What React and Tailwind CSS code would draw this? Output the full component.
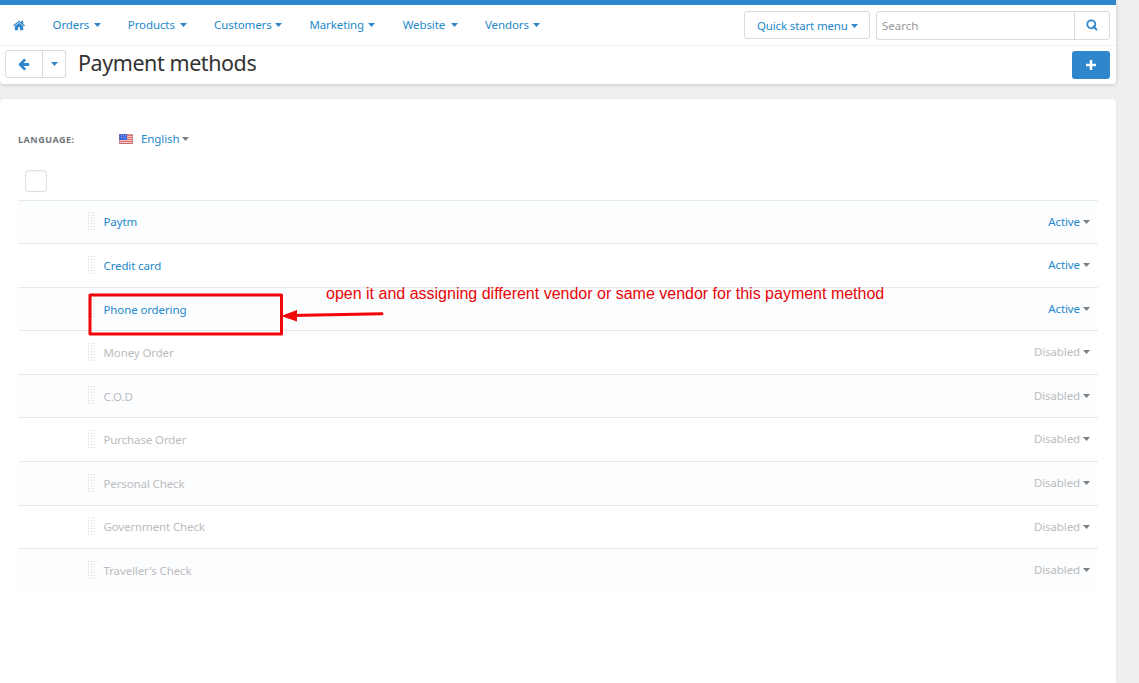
import React, { useState } from 'react';

const MENU = [
  { label: 'Orders', width: 'w-[41px]' },
  { label: 'Products', width: 'w-[52px]' },
  { label: 'Customers', width: 'w-[61px]' },
  { label: 'Marketing', width: 'w-[59px]' },
  { label: 'Website', width: 'w-[48px]' },
  { label: 'Vendors', width: 'w-[48px]' },
];

const METHODS = [
  { name: 'Paytm', active: true, height: 'h-[43px]', offset: 'pb-[1px]' },
  { name: 'Credit card', active: true, height: 'h-[44px]', offset: 'pt-[1px]' },
  { name: 'Phone ordering', active: true, height: 'h-[43px]', offset: 'pt-[1px]' },
  { name: 'Money Order', active: false, height: 'h-[44px]', offset: 'pt-[1px]' },
  { name: 'C.O.D', active: false, height: 'h-[43px]', offset: 'pt-[1px]' },
  { name: 'Purchase Order', active: false, height: 'h-[44px]', offset: 'pt-[1px]' },
  { name: 'Personal Check', active: false, height: 'h-[44px]', offset: 'pt-[1px]' },
  { name: 'Government Check', active: false, height: 'h-[43px]', offset: 'pb-[1px]' },
  { name: "Traveller's Check", active: false, height: 'h-[44px]', offset: 'pt-[1px]' },
];

function Caret({ className = 'text-[#2f86cb]' }) {
  return (
    <svg viewBox="0 0 7 4" className={`w-[7px] h-[4px] shrink-0 ${className}`}>
      <path d="M0 0h7L3.5 4z" fill="currentColor" />
    </svg>
  );
}

function HomeIcon() {
  return (
    <svg viewBox="0 0 1792 1792" className="w-[13px] h-[13px]" fill="currentColor">
      <path d="M1408 992v480q0 26-19 45t-45 19h-384v-384h-256v384h-384q-26 0-45-19t-19-45v-480q0-1 .5-3t.5-3l575-474 575 474q1 2 1 6zm223-69l-62 74q-8 9-21 11h-3q-13 0-21-7l-692-577-692 577q-12 8-24 7-13-2-21-11l-62-74q-8-10-7-23.5t11-21.5l719-599q32-26 76-26t76 26l244 204v-195q0-14 9-23t23-9h192q14 0 23 9t9 23v408l219 182q10 8 11 21.5t-7 23.5z" />
    </svg>
  );
}

function FlagIcon() {
  return (
    <svg viewBox="0 0 14 10" className="w-[14px] h-[10px]">
      <rect width="14" height="10" fill="#f5c3be" />
      <path d="M0 1.5h14M0 3.5h14M0 5.5h14M0 7.5h14M0 9.5h14" stroke="#e4706a" />
      <rect width="8" height="6" fill="#4169dc" />
      <path d="M2 1.5h5M2 3.5h5" stroke="#7f9cf0" strokeDasharray="1 1" />
      <rect x=".5" y=".5" width="13" height="9" fill="none" stroke="#8c6a8a" strokeOpacity=".4" />
    </svg>
  );
}

function DragHandle() {
  return (
    <svg viewBox="0 0 7 18" className="w-[7px] h-[18px]">
      <path d="M.5 0v18M3.5 0v18M5.7 0v18" stroke="#d6d6d6" strokeDasharray="1 1.8" />
    </svg>
  );
}

function MethodRow({ method, striped }) {
  const { name, active, height, offset } = method;
  return (
    <div className={`flex items-center border-t border-[#e6eaeb] ${height} ${striped ? 'bg-[#fbfdff]' : ''}`}>
      <div className="pl-[70px] pr-[8.5px] pb-[2px]"><DragHandle /></div>
      <a className={`tracking-[-0.12px] ${offset} ${active ? 'text-[#2488ca]' : 'text-[#bcbcbc]'}`}>{name}</a>
      <div className={`ml-auto flex items-center gap-[3px] pr-[8px] pb-[1px] ${active ? 'text-[#2488ca]' : 'text-[#bcbcbc]'}`}>
        <span className="tracking-[-0.1px]">{active ? 'Active' : 'Disabled'}</span>
        <Caret className="text-[#7b7f82]" />
      </div>
    </div>
  );
}

export default function App() {
  const [query, setQuery] = useState('');
  return (
    <div className="relative w-[1139px] h-[683px] overflow-hidden bg-[#eeeff1] font-['Noto_Sans',sans-serif] text-[11.5px] leading-[16px] text-[#2488ca]">
      <div className="w-[1116px] h-full flex flex-col">
        <header className="h-[84px] shrink-0 bg-white border-t-[5px] border-[#2f86cb] rounded-b-[4px] shadow-[0_1px_4px_rgba(0,0,0,0.16)]">
          <nav className="h-[41px] flex items-center border-b border-[#f0f2f2] pl-[13px] pr-[6px]">
            <div className="w-[39.5px] text-[#2f86cb]"><HomeIcon /></div>
            <div className="flex gap-[27.3px]">
              {MENU.map((item) => (
                <a key={item.label} className="flex items-center">
                  <span className={`${item.width} whitespace-nowrap tracking-[-0.1px]`}>{item.label}</span>
                  <Caret />
                </a>
              ))}
            </div>
            <button className="ml-auto w-[126px] h-[28px] flex items-center gap-[3px] pl-[12px] pt-[1px] border border-[#d5dbdf] rounded-[3px] whitespace-nowrap">
              <span className="w-[91px] text-left tracking-[-0.15px]">Quick start menu</span>
              <Caret />
            </button>
            <div className="ml-[6px] mt-[1px] w-[234px] h-[29px] flex border border-[#d5dbdf] rounded-[3px]">
              <input
                value={query}
                onChange={(e) => setQuery(e.target.value)}
                placeholder="Search"
                className="w-[198px] pl-[5px] border-r border-[#d5dbdf] outline-none placeholder:text-[#999]"
              />
              <button className="flex-1 flex items-center justify-center pb-[1px]">
                <svg viewBox="0 0 12 12" className="w-[12px] h-[12px]" fill="none" stroke="#2f86cb" strokeWidth="1.8">
                  <circle cx="5.3" cy="5.3" r="4" />
                  <path d="M6.8 7l4.2 4" />
                </svg>
              </button>
            </div>
          </nav>
          <div className="h-[36px] flex items-center pl-[5px] pr-[6px]">
            <div className="w-[61px] h-[28px] flex border border-[#d5dbdf] rounded-[3px]">
              <button className="w-[37px] flex items-center justify-center border-r border-[#d5dbdf]">
                <svg viewBox="0 0 1600 1792" className="w-[12px] h-[13px]" fill="#2f86cb">
                  <path d="M1536 832v128q0 53-32.5 90.5t-84.5 37.5h-704l293 294q38 36 38 90t-38 90l-75 76q-37 37-90 37-52 0-91-37l-651-652q-37-37-37-90 0-52 37-91l651-650q38-38 91-38 52 0 90 38l75 74q38 38 38 91t-38 91l-293 293h704q52 0 84.5 37.5t32.5 90.5z" />
                </svg>
              </button>
              <button className="w-[22px] flex items-center justify-center"><Caret /></button>
            </div>
            <h1 className="ml-[12px] pb-[2px] text-[21.5px] leading-[28px] tracking-[-0.43px] text-[#333]">Payment methods</h1>
            <button className="ml-auto mt-[2px] w-[38px] h-[28px] flex items-center justify-center pb-[1px] rounded-[3px] bg-[#2f86cb]">
              <svg viewBox="0 0 10 10" className="w-[10px] h-[10px]">
                <path d="M5 0v10M0 5h10" stroke="#fff" strokeWidth="2.4" />
              </svg>
            </button>
          </div>
        </header>

        <main className="mt-[15px] flex-1 bg-white rounded-t-[4px] shadow-[0_0_2px_rgba(0,0,0,0.08)] pl-[18px] pr-[18px]">
          <div className="h-[71px] pt-[32px] flex items-start">
            <span className="w-[101px] pt-[1px] text-[9px] font-bold tracking-[0.52px] text-[#6f7578]">LANGUAGE:</span>
            <div className="pt-[3px]"><FlagIcon /></div>
            <span className="ml-[8px] w-[41px] tracking-[-0.1px]">English</span>
            <Caret className="mt-[6px] text-[#7b7f82]" />
          </div>
          <div className="h-[30px] pl-[7px]">
            <div className="w-[22px] h-[22px] border border-[#dcdfe1] rounded-[3px] shadow-[inset_0_1px_2px_rgba(0,0,0,0.05)]" />
          </div>
          {METHODS.map((method, i) => (
            <MethodRow key={method.name} method={method} striped={i % 2 === 0} />
          ))}
        </main>
      </div>

      {/* annotation */}
      <svg viewBox="0 0 300 46" className="absolute left-[86px] top-[291px] w-[300px] h-[46px]" fill="none" stroke="#f20509">
        <rect x="4" y="4" width="191.5" height="39" strokeWidth="3" strokeLinejoin="round" />
        <path d="M205 24.5L296 22.8" strokeWidth="3" strokeLinecap="round" />
        <path d="M195 25L211 19v11.5z" fill="#f20509" stroke="none" />
      </svg>
      <p className="absolute left-[326px] top-[284px] whitespace-nowrap font-['Liberation_Sans',sans-serif] text-[16px] leading-[20px] text-[#e80508]">
        open it and assigning different vendor or same vendor for this payment method
      </p>
    </div>
  );
}
